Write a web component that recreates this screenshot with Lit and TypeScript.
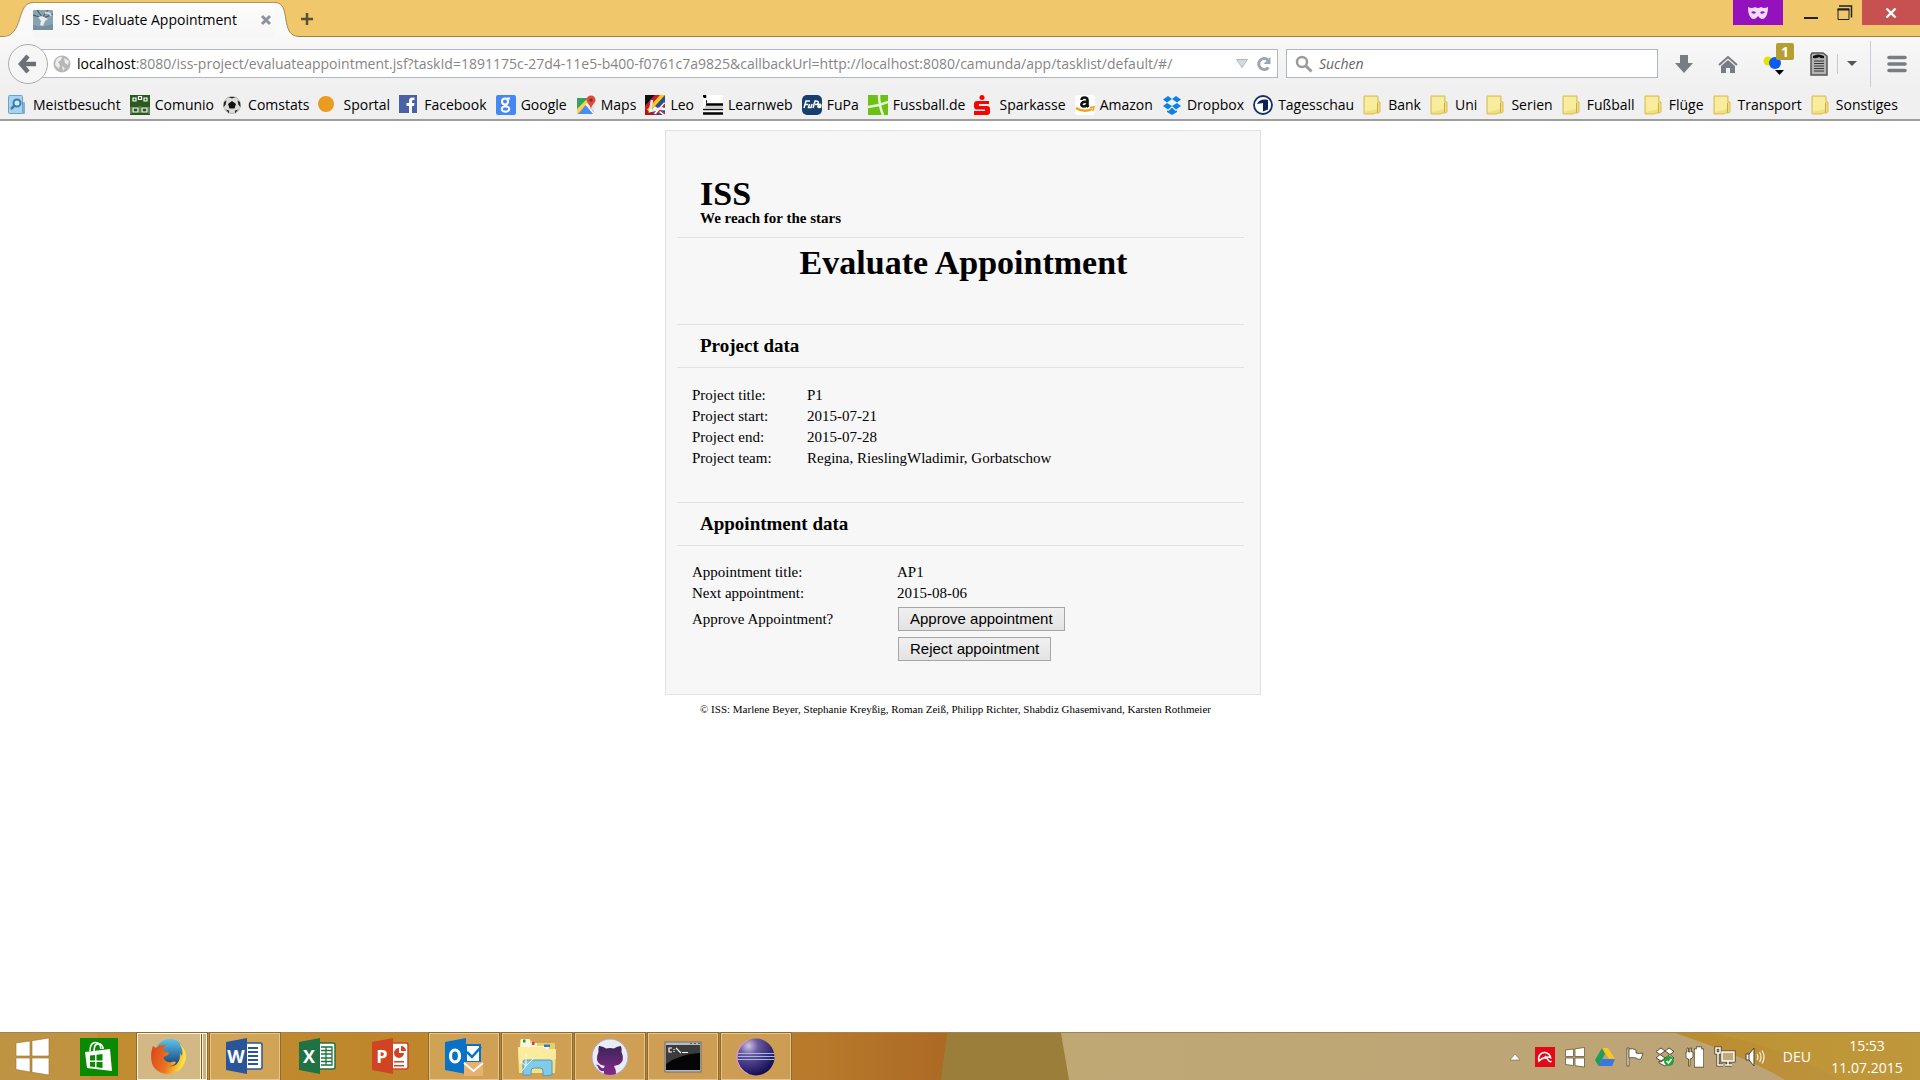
import { LitElement, html, svg, css } from "lit";
import { customElement } from "lit/decorators.js";

const folder = svg`<path d="M1 1h14v6h2v10l-2 1h-3l-1 1H1z" fill="#f2df7c" stroke="#d9bd55"/><path d="M2 2h12v12l-12 3z" fill="#f8ec9e"/><path d="M14.500 8v9.500" stroke="#c9ab48"/>`;

const bookmarks: { label: string; icon: unknown }[] = [
  {
    label: "Meistbesucht",
    icon: svg`<rect x="4" y="7" width="13" height="12" rx="1" fill="#7fb2d6"/><rect x="0.500" y="0.500" width="14" height="18" rx="1" fill="#a5d3f0" stroke="#6ba3c9"/><circle cx="9" cy="8" r="3.500" fill="#cdeaf9" stroke="#3d7ca8" stroke-width="2"/><path d="M6.500 10.500 3 14" stroke="#3d7ca8" stroke-width="2.500"/>`,
  },
  {
    label: "Comunio",
    icon: svg`<rect width="20" height="20" fill="#2b5a1f"/><g fill="none" stroke="#fff" stroke-width="1.200"><path d="M3 3h3v3H3zM8.500 1.500h3v3h-3zM14 3h3v3h-3zM3 13h5v4H3zM12 13h5v4h-5z"/><path d="M1 19v-7M10 18v-7M19 19v-7" stroke="#79a36b"/></g>`,
  },
  {
    label: "Comstats",
    icon: svg`<circle cx="9" cy="10" r="8.500" fill="#dcdcd8" stroke="#b5b5b0"/><path d="m9 6 4 3-1.500 4.500h-5L5 9z" fill="#111"/><path d="M5.500 2h7L9 3.500zM1 7l2.500-1.500L2.500 10 .5 12zM17 7l-2.500-1.500 1 4.500 2 2zM3 14.500l3 1v3zM15 14.500l-3 1v3z" fill="#222"/>`,
  },
  { label: "Sportal", icon: svg`<circle cx="8" cy="9" r="8" fill="#eb9a22"/>` },
  {
    label: "Facebook",
    icon: svg`<rect width="18" height="18" fill="#4a62a3"/><path d="M10 18v-7H7.500V8H10V6c0-3 1.500-4 5.500-3.500V5c-2 0-2.500 0-2.500 1.500V8h2.500l-.5 3h-2v7z" fill="#fff"/>`,
  },
  {
    label: "Google",
    icon: svg`<rect width="20" height="20" rx="2" fill="#4688f1"/><g fill="none" stroke="#fff" stroke-width="2"><circle cx="9" cy="6.500" r="3"/><path d="M11 3.500h3M9.500 9.500c-1.500 1 0 1.500 1.500 2.500"/><ellipse cx="9.500" cy="14" rx="3.800" ry="2.700"/></g>`,
  },
  {
    label: "Maps",
    icon: svg`<rect x="1" y="3" width="17" height="16" rx="1" fill="#e6e3dc"/><path d="M1 3h12L1 16z" fill="#34a260"/><path d="m1 19 9-10 8 8v2z" fill="#4a8df6"/><path d="M1 14 12 3l2 2L2 19H1z" fill="#fbd14b"/><path d="m10 9 8 10" stroke="#fff" stroke-width="1.500"/><path d="M10.500 5a4.500 4.500 0 0 1 9 0c0 3-3.500 4-4.500 9-1-5-4.500-6-4.500-9" fill="#dc4b3e"/><circle cx="15" cy="5" r="1.600" fill="#8c2720"/>`,
  },
  {
    label: "Leo",
    icon: svg`<rect width="20" height="20" fill="#2b4d96"/><path d="M20 8 9 20M9 12l11 8M20 14H8" stroke="#fff" stroke-width="2.500"/><path d="M20 9 11 20M12 13l8 6" stroke="#c22" stroke-width="1.200"/><path d="M0 0h10L0 11z" fill="#111"/><path d="M10 0h6L0 18v-7z" fill="#d6171e"/><path d="M15 0h5L2 20H0v-3z" fill="#f8c81c"/><path d="M0 14v6h12z" fill="#b3151b"/><path d="M7 5 5 16l13-3" fill="none" stroke="#eee" stroke-width="2.500"/>`,
  },
  {
    label: "Learnweb",
    icon: svg`<rect width="20" height="20" fill="#fff"/><path d="M0 1h2v2M3 6.500h1M3 9.500h17M0 18.500h20" stroke="#000" stroke-width="2.500" fill="none"/><path d="M0 14.500h20" stroke="#111" stroke-width="1.500"/><path d="M2 12h18" stroke="#999"/>`,
  },
  {
    label: "FuPa",
    icon: svg`<rect width="20" height="20" rx="5" fill="#173f6e"/><path d="M2 13 4 6h4M3 9.500h3M7.500 9l-1 3.500h2.500l1-3.500M11 13l2-7c5-.5 4 3.500 0 3.500M19 9.500c-3-1-4 3-2 3l2-3-.5 3.500" fill="none" stroke="#fff" stroke-width="1.500"/>`,
  },
  {
    label: "Fussball.de",
    icon: svg`<rect width="20" height="20" fill="#6cc016"/><path d="M11 0c0 7 1 13 4 20M0 12l11-2 9-3" fill="none" stroke="#e8f7d5" stroke-width="2.500"/>`,
  },
  {
    label: "Sparkasse",
    icon: svg`<g fill="#f00"><circle cx="8" cy="2.500" r="2.500"/><path d="M3 6h12v3H5v2h8q3 0 3 3v3q0 3-3 3H0v-4h11v-1.500H3q-3 0-3-3V9q0-3 3-3"/></g>`,
  },
  {
    label: "Amazon",
    icon: svg`<rect width="20" height="20" rx="3" fill="#fff"/><path d="M6.500 5c0-3 6-3.500 6 0v5q0 1 1 2M12 6.500c-7 0-7 5-3 5 2 0 3-1.500 3-3" fill="none" stroke="#111" stroke-width="2.600"/><path d="M1 13q8 5 16 1" fill="none" stroke="#f7a01b" stroke-width="2.500"/><path d="m15 12.500 4-.5-1 4" fill="none" stroke="#f7a01b" stroke-width="1.500"/>`,
  },
  {
    label: "Dropbox",
    icon: svg`<path d="m6 1 4 3-5 3.500L1 4.500zM14 1l-4 3 5 3.500 4-3zM1 11l4-3 5 3-4 3.500zM19 11l-4-3-5 3 4 3.500zM5 15.500l1.500.5 3.500-3.500 3.500 3.500 1.500-.5V17l-5 3-5-3z" fill="#0c7fe8"/>`,
  },
  {
    label: "Tagesschau",
    icon: svg`<circle cx="10" cy="10" r="9" fill="#fff" stroke="#1b2f66" stroke-width="1.800"/><path d="M4 9q2-5 9-4.500L15 5v9.500l-5 2V8z" fill="#0d2257"/>`,
  },
  ...["Bank", "Uni", "Serien", "Fußball", "Flüge", "Transport", "Sonstiges"].map((label) => ({ label, icon: folder })),
];

const officeDoc = (color: string, letter: string, detail: unknown) => svg`
  <path d="M20 5h14q2 0 2 2v22q0 2-2 2H20z" fill="#fff" stroke="${color}" stroke-width="1.500"/>
  ${detail}
  <path d="M0 4 21 0v36L0 32z" fill="${color}"/>
  <text x="10" y="25" text-anchor="middle" class="letter">${letter}</text>`;

const windowsMark = svg`<path d="M0 5 14 3v15H0zM16 2.700 33 0v18H16zM0 20h14v14L0 31.500zM16 20h17v17l-17-2.700z" fill="#fff" stroke="#9a7434" stroke-width=".6"/>`;

const tasks: { name: string; state: string; icon: unknown }[] = [
  {
    name: "Store",
    state: "",
    icon: svg`<rect width="38" height="38" fill="#0a8a00"/><path d="m5 14 25-3 2 22-25-3z" fill="#fff"/><path d="M10 13c0-11 10-11 11-2M14 13c0-10 9-9 9-2" fill="none" stroke="#fff" stroke-width="1.600"/><path d="M10 17.500l5-.6v5.600h-5zM16.500 16.700l6-.7v6.500h-6zM10 24h5v5l-5-.6zM16.500 24h6v6l-6-.7z" fill="#0a8a00"/>`,
  },
  {
    name: "Firefox",
    state: "active",
    icon: svg`<defs><linearGradient id="ff-globe" x2="0" y2="1"><stop stop-color="#5ec3ea"/><stop offset="1" stop-color="#0c2f6d"/></linearGradient><linearGradient id="ff-fox" x2="1" y2=".3"><stop stop-color="#d9411c"/><stop offset=".6" stop-color="#ec7420"/><stop offset="1" stop-color="#fbdc3a"/></linearGradient></defs><circle cx="20" cy="16" r="15" fill="url(#ff-globe)"/><path d="M3 8 6 10q5-4 10-3l-3 5q1 2 4 2c3 0 2 3-1 4-3 0-3 3 0 5 4 3 7-1 10 1-1 4-7 5-10 3 8 4 15-2 14-12l2 3c1-4 0-9-3-13 8 6 8 17 4 23-6 10-23 11-30 0C0 21 1 13 3 8" fill="url(#ff-fox)"/><path d="M29 5c8 6 9 16 3 23 2-8 3-15-3-23" fill="#ffe14d"/>`,
  },
  {
    name: "Word",
    state: "open",
    icon: officeDoc("#2a5699", "W", svg`<path d="M22 10h10M22 14h10M22 18h10M22 22h10M22 26h10" stroke="#2a5699" stroke-width="1.800"/>`),
  },
  {
    name: "Excel",
    state: "",
    icon: officeDoc("#207245", "X", svg`<path d="M22 9h11v18H22M22 12.500h11M22 16h11M22 20h11M22 23.500h11M27 9v18" fill="none" stroke="#207245" stroke-width="1.300"/>`),
  },
  {
    name: "PowerPoint",
    state: "",
    icon: officeDoc("#d04423", "P", svg`<path d="M27 10a5 5 0 1 0 5 5h-5z" fill="#d04423"/><path d="M29 8a5 5 0 0 1 5 5h-5zM22 23h10v1.500H22zM22 27h10v1.500H22z" fill="#d04423"/>`),
  },
  {
    name: "Outlook",
    state: "open",
    icon: svg`<path d="M21 7h14v17H21z" fill="#fff" stroke="#0a72c6" stroke-width="2"/><path d="m22 14 5 5 9-10" fill="none" stroke="#0a72c6" stroke-width="2.500"/><path d="M0 4 21 0v36L0 32z" fill="#0a72c6"/><ellipse cx="10" cy="18" rx="4.500" ry="6" fill="none" stroke="#fff" stroke-width="3.200"/><path d="M19 24h19v14H19z" fill="#e8b071"/><path d="m19 25 9.500 8 9.500-8" fill="none" stroke="#fff" stroke-width="1.800"/>`,
  },
  {
    name: "Explorer",
    state: "open",
    icon: svg`<path d="M2 2h11l2 3h22v30H1z" fill="#e9cf6b"/><path d="M3 1h9v4h7v3h12v3H2z" fill="#f9f5e0"/><path d="M5 1.500h2.500v3H5z" fill="#1d9c3c"/><path d="M14 4h2.500v3H14z" fill="#d33"/><path d="M26 6.500h6v2.500h-6z" fill="#2a7fd0"/><path d="M0 9h24l3 2h11l-1 24H1z" fill="#f7e083"/><path d="M0 9h24l3 2h11v10L1 26z" fill="#fbeb9c"/><path d="M5 37V24q0-2 2-2h25q2 0 2 2v13l-9 1v-5q0-3-3-3h-6q-3 0-3 3v4z" fill="#7fcbe8" stroke="#4a9cc4"/><path d="M8 28 2 23M8 28V16M8 28l8-8M8 28l-5 6" stroke="#fffbe0" stroke-width="1"/>`,
  },
  {
    name: "GitHub",
    state: "open",
    icon: svg`<defs><linearGradient id="gh" x2="0" y2="1"><stop stop-color="#3a2458"/><stop offset="1" stop-color="#88298c"/></linearGradient></defs><circle cx="19" cy="19" r="18" fill="#e9ecf6" stroke="#aab"/><path d="M8 8q4 0 7 2.500 4-1 8 0Q26 8 30 8q1 3 .5 6 5 12-7.500 14 2 3 2 8-6 2-12 0v-3c-6 1-5-5-8-6 4-1 4 4 8 3 0-1 .5-2 1-2Q2.500 26 7.500 14 7 11 8 8" fill="url(#gh)"/>`,
  },
  {
    name: "Command prompt",
    state: "open",
    icon: svg`<rect x="1" y="4" width="36" height="30" fill="#b8bcc0" stroke="#6c7072"/><rect x="2" y="7" width="34" height="25" fill="#050505"/><path d="M2 7h34v8Q16 16 2 26z" fill="#3c3c3c"/><path d="M26 5.500h2M30 5.500h2M34 5.500h2" stroke="#555"/><path d="M8 10H5v4h3M10 11v1M10 13v1M12 10l5 5M18 14.500h6" fill="none" stroke="#fff" stroke-width="1.200"/>`,
  },
  {
    name: "Eclipse",
    state: "open",
    icon: svg`<defs><radialGradient id="ecl" cx=".3" cy=".2" r=".85"><stop stop-color="#cfc5e2"/><stop offset=".3" stop-color="#6a5aa0"/><stop offset="1" stop-color="#0e0a52"/></radialGradient></defs><circle cx="19" cy="19" r="18.500" fill="url(#ecl)"/><path d="M11 2A18.500 18.500 0 0 0 11 36" fill="none" stroke="#dc94cc" stroke-width="1.200"/><path d="M1 15.500h36M1 18.500h37M1 21.500h36" stroke="#a9b7e6" stroke-width="1.200"/>`,
  },
];

const trayIcons: { name: string; icon: unknown }[] = [
  {
    name: "Antivirus",
    icon: svg`<rect width="20" height="20" fill="#e30a17"/><path d="M4 14C2.500 9 6 5 10 5.500c3 .5 5 2.500 5.500 5-2-1-3.500-.5-5 .5-2-.5-4 .5-6.500 3z" fill="none" stroke="#fff" stroke-width="1.600"/><path d="m10 9 4 5q1.500 1.500 2.500 0" fill="none" stroke="#fff" stroke-width="1.500"/>`,
  },
  {
    name: "Windows update",
    icon: svg`<path d="m.5 3 8-1v7.500h-8zM10 1.800 19.500.5v9H10zM.5 11h8v7.500l-8-1zM10 11h9.500v9L10 18.700z" fill="#fff" stroke="#6a5a38" stroke-width=".8"/>`,
  },
  {
    name: "Drive",
    icon: svg`<path d="M7 1h6l7 11h-6z" fill="#f7c81e"/><path d="m7 1 3 6-6.500 12L0 13z" fill="#1f9e55"/><path d="M7 12h13l-3 7H3.500z" fill="#3b77e0"/>`,
  },
  {
    name: "Action center",
    icon: svg`<path d="M2 1h2v18H2z" fill="#fff" stroke="#4d4126" stroke-width=".8"/><path d="M4 2q4-1 7 1v3q3 1 7 0l-2 6q-3 1-5-1-4-1-7 0z" fill="#fff" stroke="#4d4126" stroke-width=".8"/>`,
  },
  {
    name: "Dropbox sync",
    icon: svg`<g fill="#fff" stroke="#4d4126" stroke-width=".9"><path d="m6 1 4 3-5 3.500-4-3zM14 1l-4 3 5 3.500 4-3zM1 11l4-3.500 5 3.500-4 3zM19 11l-4-3.500-5 3.500 4 3zM4 14l2 1 4-3 4 3v2l-4 2-6-3z"/></g><circle cx="14" cy="14" r="5" fill="#23a43a"/><path d="m11.500 14 2 2 3-4" fill="none" stroke="#fff" stroke-width="1.500"/>`,
  },
  {
    name: "Power",
    icon: svg`<g stroke="#4d4126" stroke-width=".8" fill="#fff"><path d="M2 1h1.500v4H5V1h1.500v4H8v5q-1 2-3 2v7H3.500v-7Q1 12 1 10V5h1z"/></g><path d="M10.500 3h2V1h3v2h2v16h-7z" fill="none" stroke="#4d4126" stroke-width="3"/><path d="M10.500 3h2V1h3v2h2v16h-7z" fill="#fff" stroke="#fff" stroke-width="1.600"/>`,
  },
  {
    name: "Network",
    icon: svg`<path d="M7 5h12v9H7zM10 18h7M13 14v4M3 6v12h5M1 1h4v5H1z" fill="none" stroke="#4d4126" stroke-width="3.200"/><path d="M7 5h12v9H7z" fill="#c0a97a"/><path d="M7 5h12v9H7zM10 18h7M13 14v4M3 6v12h5M1 1h4v5H1z" fill="none" stroke="#fff" stroke-width="1.500"/>`,
  },
  {
    name: "Volume",
    icon: svg`<path d="M1 7h3l5-6v18l-5-6H1z" fill="#fff" stroke="#4d4126"/><path d="M4 7v6" stroke="#4d4126"/><path d="M12 7q2 3 0 6M14.500 5q3 5 0 10M17 3.500q4 6.500 0 13" fill="none" stroke="#f3ead2" stroke-width="1.300"/>`,
  },
];

@customElement("browser-window")
class BrowserWindow extends LitElement {
  static styles = css`
    :host { display: block; font: 14px/20px "Open Sans", "Noto Sans", sans-serif; color: #000; }
    svg { display: block; flex: none; }
    button { border: 0; padding: 0; background: none; font: inherit; color: inherit; display: flex; align-items: center; justify-content: center; }
    .strip { display: flex; height: 37px; background: #f0c76a; box-shadow: inset 0 -1px #9b8347; }
    .tab { display: flex; height: 37px; min-width: 0; }
    .body { display: flex; align-items: center; width: 242px; margin-top: 2px; border-top: 1px solid #a99560; background: linear-gradient(#fdfdfd, #f6f6f6); }
    .title { flex: 1; padding-left: 8px; white-space: nowrap; }
    .close { margin-right: 2px; }
    .new { width: 16px; height: 37px; }
    .space { flex: 1; }
    .caption { display: flex; align-items: flex-start; }
    .mask { display: flex; align-items: center; justify-content: center; width: 50px; height: 25px; background: #9412bd; margin-right: 11px; }
    .min, .max { width: 34px; height: 25px; }
    .quit { width: 58px; height: 25px; background: #c75050; }
    .nav { display: flex; align-items: center; height: 51px; padding: 2px 0 0 8px; background: linear-gradient(#f8f8f8, #f0f0f0); box-sizing: border-box; }
    .back { position: relative; z-index: 1; width: 40px; height: 40px; border: 1px solid #adadad; border-radius: 50%; background: #f6f6f6; box-sizing: border-box; }
    .field { display: flex; align-items: center; height: 29px; border: 1px solid #b0b7c1; background: #fff; box-sizing: border-box; min-width: 0; }
    .address { flex: 1; margin-left: -8px; padding: 0 2px 0 12px; }
    .address svg + .url { margin-left: 6px; }
    .url { flex: 1; min-width: 0; overflow: hidden; white-space: nowrap; color: #858585; }
    .host { color: #000; }
    .field button { width: 22px; height: 24px; }
    .search { width: 372px; margin-left: 8px; padding: 0 8px; gap: 6px; }
    .search input { flex: 1; min-width: 0; border: 0; outline: 0; background: none; padding: 0; font: inherit; font-style: italic; }
    .search input::placeholder { color: #666; opacity: 1; }
    .tools { display: flex; align-items: center; margin-left: 4px; }
    .tool { width: 44px; height: 40px; }
    .note { position: relative; width: 50px; }
    .badge { position: absolute; left: 26px; top: -1px; width: 18px; height: 17px; border-radius: 2px; background: #b59f33; color: #fff; font-weight: bold; line-height: 17px; }
    .script { width: 38px; border-right: 1px solid #c4cad3; height: 20px; }
    .drop { width: 33px; height: 46px; padding-right: 5px; border-right: 1px solid #c9ced6; }
    .menu { width: 49px; height: 40px; padding-left: 3px; }
    .marks { display: flex; align-items: center; height: 29px; padding: 2px 22px 0 8px; background: #f0f0f0; border-bottom: 2px solid #9e9e9e; justify-content: space-between; }
    .mark { display: flex; align-items: center; gap: 5px; color: #000; text-decoration: none; white-space: nowrap; }
  `;

  render() {
    return html`
      <div class="strip">
        <div class="tab">
          <svg width="33" height="37"><path d="M0 37V36H3C24 36 16 2.500 33 2.500V37z" fill="#f9f9f9"/><path d="M0 36.500h3C24 36 16 2.500 33 2.500" fill="none" stroke="#a08b54"/></svg>
          <div class="body">
            <svg width="20" height="20"><rect width="20" height="20" rx="1" fill="#8ba3b0"/><path d="M0 5 10 8 20 4M4 0l5 7M15 0l-6 8" fill="none" stroke="#45606f" stroke-width="1.200"/><path d="M5 7 9 6l6 3-3 2-2 5-3-1 1-4z" fill="#e4edf0"/><path d="M0 15q8 3 20-1v6H0z" fill="#7391a0"/><path d="M12 3q5-1 6 3" stroke="#cad9e0" stroke-width="2" fill="none"/></svg>
            <span class="title">ISS - Evaluate Appointment</span>
            <button class="close" aria-label="Close tab"><svg width="14" height="14"><path d="m3 3 8 8M11 3l-8 8" stroke="#8e949c" stroke-width="3"/></svg></button>
          </div>
          <svg width="24" height="37"><path d="M0 2.500C17 2.500 4 36 24 36.500V37H0z" fill="#f9f9f9"/><path d="M0 2.500C17 2.500 4 36 24 36.500" fill="none" stroke="#a08b54"/></svg>
        </div>
        <button class="new" aria-label="New tab"><svg width="14" height="14"><path d="M7 1v12M1 7h12" stroke="#5c4f31" stroke-width="2.500"/></svg></button>
        <div class="space"></div>
        <div class="caption">
          <span class="mask"><svg width="20" height="12"><path d="M0 0q4 2 7 0 3 2 6 0 3 2 7 0c0 12-6 15-10 9C6 15 0 12 0 0" fill="#f4dcfb"/><path d="M3 5q4-2 5 1-3 2-5-1M17 5q-4-2-5 1 3 2 5-1" fill="#9412bd"/></svg></span>
          <button class="min" aria-label="Minimize"><svg width="14" height="12"><path d="M0 11h14" stroke="#222" stroke-width="2"/></svg></button>
          <button class="max" aria-label="Restore"><svg width="16" height="16"><path d="M1 4h11v10.500H1z" fill="none" stroke="#222"/><path d="M.5 4.500h12" stroke="#222" stroke-width="2"/><path d="M2 1h12.500v11.500" fill="none" stroke="#222" stroke-width="1.500"/></svg></button>
          <button class="quit" aria-label="Close"><svg width="12" height="12"><path d="m1.500 1.500 9 9M10.500 1.500l-9 9" stroke="#fff" stroke-width="2.400"/></svg></button>
        </div>
      </div>
      <div class="nav">
        <button class="back" aria-label="Back"><svg width="20" height="20"><path d="M10 2 3 10l7 8M3 10h15" fill="none" stroke="#6d7076" stroke-width="4.500"/></svg></button>
        <div class="field address">
          <svg width="18" height="18"><circle cx="9" cy="9" r="8.500" fill="#b7b7b7"/><path d="M3 5q3-4 6-3l-1 3-3 2 2 3-1 4-4-4zM11 3l5 3-1 4-3-2zM9 11l3 2-2 3z" fill="#eee"/></svg>
          <span class="url"><span class="host">localhost</span>:8080/iss-project/evaluateappointment.jsf?taskId=1891175c-27d4-11e5-b400-f0761c7a9825&amp;callbackUrl=http://localhost:8080/camunda/app/tasklist/default/#/</span>
          <button aria-label="Address history"><svg width="12" height="9"><path d="M.5.500h11L6 8.500z" fill="#d5dae0" stroke="#aeb6c0"/></svg></button>
          <button aria-label="Reload"><svg width="16" height="16"><path d="M12.500 11.500A5.500 5.500 0 1 1 12 4" fill="none" stroke="#9aa5b1" stroke-width="3"/><path d="M14.500 1v7h-7z" fill="#9aa5b1"/></svg></button>
        </div>
        <div class="field search">
          <svg width="18" height="18"><circle cx="7" cy="7" r="5" fill="none" stroke="#9b9b9b" stroke-width="2.500"/><path d="m10.500 10.500 6 6" stroke="#9b9b9b" stroke-width="3"/></svg>
          <input type="text" aria-label="Suchen" placeholder="Suchen">
        </div>
        <div class="tools">
          <button class="tool" aria-label="Downloads"><svg width="18" height="18"><path d="M5 0h8v8h5l-9 10L0 8h5z" fill="#797c80"/></svg></button>
          <button class="tool" aria-label="Home"><svg width="20" height="18"><path d="m1 10 9-8 9 8" fill="none" stroke="#797c80" stroke-width="2"/><path d="m3 11 7-6 7 6v7h-5v-5H8v5H3z" fill="#797c80"/></svg></button>
          <button class="tool note" aria-label="Proxy, 1 note"><svg width="24" height="22"><circle cx="5" cy="8" r="4.500" fill="#e4e400"/><circle cx="12" cy="10" r="6" fill="#0a5cf0"/><path d="M12 17h9l-4.500 5z" fill="#000"/></svg><span class="badge">1</span></button>
          <button class="script" aria-label="Scripts"><svg width="18" height="24"><path d="M2 1h11l4 3v19H1V3z" fill="#b3b3b3" stroke="#555" stroke-width="1.500"/><path d="M3 4q5-3 11 0v2q-3 1-5-1-3 2-6 1z" fill="#111"/><path d="M4 9h10M4 11.500h10M4 14h10M4 16.500h10M4 19h10" stroke="#333"/></svg></button>
          <button class="drop" aria-label="More"><svg width="10" height="6"><path d="M0 0h10L5 5z" fill="#555"/></svg></button>
          <button class="menu" aria-label="Menu"><svg width="20" height="18"><path d="M2 2.500h16M2 9h16M2 15.500h16" stroke="#797c80" stroke-width="3.600" stroke-linecap="round"/></svg></button>
        </div>
      </div>
      <nav class="marks">
        ${bookmarks.map((b) => html`<a class="mark" href="#"><svg width="20" height="20">${b.icon}</svg>${b.label}</a>`)}
      </nav>
    `;
  }
}

@customElement("iss-page")
class IssPage extends LitElement {
  static styles = css`
    :host { display: block; padding: 9px 8px; font: 15px/21px "Liberation Serif", serif; color: #000; }
    .wrap { max-width: 596px; margin: 0 auto; padding-left: 6px; }
    .panel { border: 1px solid #e2e2e2; background: #f7f7f7; padding: 45px 16px 30px 11px; box-sizing: border-box; }
    h1, h2, h3, p { margin: 0; }
    h1, h2 { font-size: 34px; line-height: 36px; }
    .brand { padding: 0 23px 12px; }
    .slogan { font-weight: bold; line-height: 13px; }
    .name { border-top: 1px solid #e2e2e2; padding: 7px 0 43px 6px; text-align: center; }
    h3 { border: solid #e2e2e2; border-width: 1px 0; padding: 10px 23px; font-size: 19px; line-height: 22px; }
    table { border-collapse: collapse; margin: 17px 15px 33px; }
    td { padding: 0; }
    .label { width: 115px; }
    .wide .label { width: 205px; }
    .wide { margin: 16px 15px 0; }
    .act { height: 30px; padding-left: 1px; }
    .act button { display: block; height: 24px; padding: 0 11px; border: 1px solid #a6a6a6; background: linear-gradient(#f0f0f0, #e3e3e3); font: 15px/20px "Liberation Sans", sans-serif; color: #000; }
    .foot { padding: 4px 35px; font-size: 11px; line-height: 20px; white-space: nowrap; }
  `;

  render() {
    const project = [
      ["Project title:", "P1"],
      ["Project start:", "2015-07-21"],
      ["Project end:", "2015-07-28"],
      ["Project team:", "Regina, RieslingWladimir, Gorbatschow"],
    ];
    const appointment = [
      ["Appointment title:", "AP1"],
      ["Next appointment:", "2015-08-06"],
    ];
    const row = ([label, value]: string[]) => html`<tr><td class="label">${label}</td><td>${value}</td></tr>`;
    return html`
      <div class="wrap">
        <main class="panel">
          <div class="brand"><h1>ISS</h1><p class="slogan">We reach for the stars</p></div>
          <h2 class="name">Evaluate Appointment</h2>
          <h3>Project data</h3>
          <table>${project.map(row)}</table>
          <h3>Appointment data</h3>
          <table class="wide">
            ${appointment.map(row)}
            <tr><td class="label">Approve Appointment?</td><td class="act"><button>Approve appointment</button></td></tr>
            <tr><td class="label"></td><td class="act"><button>Reject appointment</button></td></tr>
          </table>
        </main>
        <footer class="foot">© ISS: Marlene Beyer, Stephanie Kreyßig, Roman Zeiß, Philipp Richter, Shabdiz Ghasemivand, Karsten Rothmeier</footer>
      </div>
    `;
  }
}

@customElement("task-bar")
class TaskBar extends LitElement {
  static styles = css`
    :host { display: flex; position: relative; height: 48px; box-sizing: border-box; font: 14px/20px "Open Sans", "Noto Sans", sans-serif; color: #fff; border-top: 1px solid #a08457; }
    svg { display: block; flex: none; overflow: visible; }
    button { border: 0; padding: 0; background: none; display: flex; align-items: center; justify-content: center; box-sizing: border-box; }
    .wall { position: absolute; inset: 0; width: 100%; height: 100%; overflow: hidden; }
    .apps, .tray { position: relative; display: flex; align-items: center; }
    .apps { gap: 3px; flex: 1; align-items: stretch; }
    .start { width: 61px; padding-left: 4px; }
    .task { width: 70px; }
    .open, .active { border: 1px solid #e3c58f; box-shadow: 0 0 0 1px #8e6a2c; background: rgba(225, 190, 125, .5); }
    .active { border-color: #fff3d8; background: linear-gradient(90deg, rgba(215, 195, 155, .8) 62px, #fff3d8 62px 63px, #7a5c2b 63px 64px, #fff3d8 64px 65px, #d2b27c 65px); }
    .active svg { margin-right: 6px; }
    .letter { font: bold 18px "Open Sans", sans-serif; fill: #fff; }
    .tray { gap: 10px; padding-right: 17px; }
    .more { margin-right: 5px; }
    .lang { margin: 0 10px 0 8px; }
    .clock { width: 72px; text-align: center; line-height: 22px; white-space: nowrap; }
  `;

  render() {
    return html`
      <svg class="wall" viewBox="0 0 1920 48" preserveAspectRatio="none" aria-hidden="true">
        <defs>
          <linearGradient id="amber"><stop stop-color="#bd913e"/><stop offset=".1" stop-color="#c18d32"/><stop offset=".45" stop-color="#bf862b"/><stop offset=".85" stop-color="#b97b2b"/><stop offset="1" stop-color="#ac6925"/></linearGradient>
          <linearGradient id="sand"><stop stop-color="#bfa874"/><stop offset="1" stop-color="#bca378"/></linearGradient>
          <linearGradient id="gold"><stop stop-color="#bb8c2e"/><stop offset="1" stop-color="#bd9645"/></linearGradient>
        </defs>
        <path d="M0 0h950v48H0z" fill="url(#amber)"/>
        <path d="M0 0h98l-8 48H0z" fill="#be9648" opacity=".6"/>
        <path d="M947 0h120l8 48H941z" fill="#9c7e3b"/>
        <path d="M1061 0h859v48h-851z" fill="url(#sand)"/>
        <path d="M1675 0h245v48h-135q-35-22-110-48" fill="url(#gold)"/>
        <path d="M1710 0h210v48h-80q-50-32-130-48" fill="#c09a35" opacity=".6"/>
      </svg>
      <div class="apps">
        <button class="start" aria-label="Start"><svg width="33" height="37">${windowsMark}</svg></button>
        ${tasks.map((t) => html`<button class="task ${t.state}" aria-label=${t.name}><svg width="38" height="38">${t.icon}</svg></button>`)}
      </div>
      <div class="tray">
        <button class="more" aria-label="Hidden icons"><svg width="10" height="6"><path d="M0 6 5 0l5 6z" fill="#fff" stroke="#7b6843" stroke-width=".6"/></svg></button>
        ${trayIcons.map((t) => html`<button aria-label=${t.name}><svg width="20" height="20">${t.icon}</svg></button>`)}
        <span class="lang">DEU</span>
        <time class="clock">15:53<br>11.07.2015</time>
      </div>
    `;
  }
}

@customElement("app-root")
class AppRoot extends LitElement {
  static styles = css`
    :host { display: flex; flex-direction: column; min-height: 100vh; background: #fff; }
    .page { flex: 1; }
  `;

  render() {
    return html`<browser-window></browser-window><iss-page class="page"></iss-page><task-bar></task-bar>`;
  }
}
